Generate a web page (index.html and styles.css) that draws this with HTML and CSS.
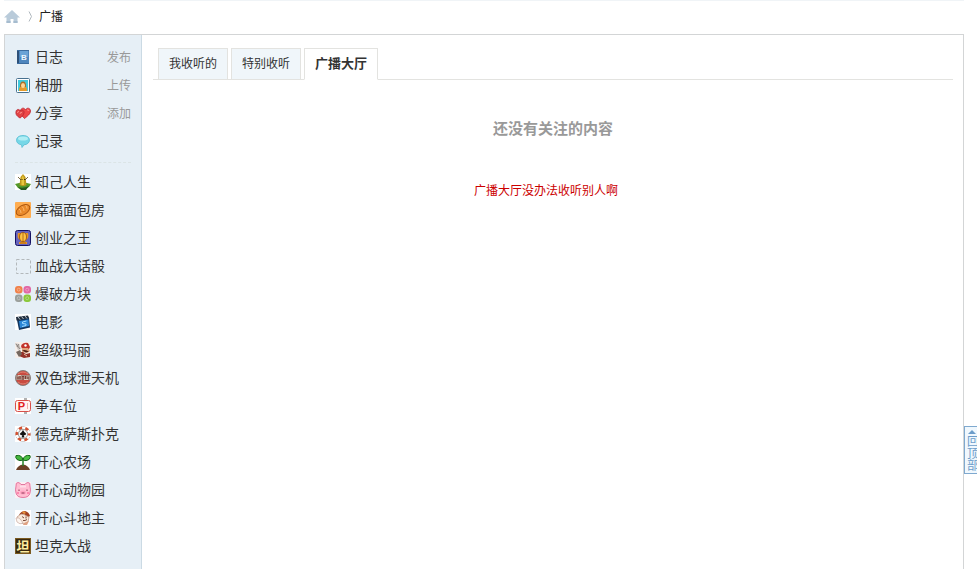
FILE: index.html
```html
<!DOCTYPE html>
<html lang="zh-CN">
<head>
    <meta charset="UTF-8">
    <meta name="viewport" content="width=device-width, initial-scale=1.0">
    <title>广播</title>
    <link rel="stylesheet" href="styles.css">
</head>
<body>

<div class="wrap">
    <nav class="crumb">
        <a href="#" class="home" aria-label="首页">
            <svg width="16" height="14" viewBox="0 0 16 14"><path d="M8 0L16 7.5H13.500V13H9.500V9H6.500V13H2.500V7.500H0Z" fill="#b9cbda"/><path d="M2.500 11H6.500V13H2.500ZM9.500 11H13.500V13H9.500Z" fill="#a6bccf"/></svg>
        </a>
        <svg class="arrow" width="5" height="11" viewBox="0 0 5 11"><path d="M1 0.500L3.500 5.500L1 10.500" fill="none" stroke="#b0b8be"/></svg>
        <a href="#">广播</a>
    </nav>

    <div class="box">
        <aside class="side">
            <ul class="apps main-apps">
                <li>
                    <svg class="icon" viewBox="0 0 16 16"><rect x="2" y="1" width="12" height="14" fill="#4f86bd"/><rect x="2" y="1" width="2" height="14" fill="#2d5078"/><path d="M2 1.500H14M2 14.500H14" stroke="#3c6c9f"/><rect x="5" y="2" width="8" height="6" fill="#6ba3d6"/><text x="9" y="11" class="letter" font-size="8" fill="#eef6fc">B</text></svg>
                    <a href="#">日志</a><a href="#" class="act">发布</a>
                </li>
                <li>
                    <svg class="icon" viewBox="0 0 16 16"><rect x="1.500" y="1.500" width="13" height="14" rx="1" fill="#fff" stroke="#47708f"/><rect x="3" y="3" width="10" height="11" fill="#3fc9dc"/><path d="M4 14V12Q4 10 6 10H10Q12 10 12 12V14Z" fill="#e69a2b"/><path d="M5 10Q4.500 4.500 8 4.500T11 10Z" fill="#ad7028"/><ellipse cx="8" cy="8.500" rx="2" ry="2.500" fill="#ffd596"/></svg>
                    <a href="#">相册</a><a href="#" class="act">上传</a>
                </li>
                <li>
                    <svg class="icon" viewBox="0 0 16 16"><path d="M9.500 13.500C6 10 5 8 5.500 5.500C6 3 9 2 10.500 5C12 2 15.500 3 15.500 6C15.500 9 12 11.500 9.500 13.500Z" fill="#ee4848" stroke="#bd2430" stroke-width=".8"/><path d="M5 13C1.500 11 0.500 9 1 6.500C1.500 4 4 3.800 5.300 5.800C7.500 4 9.500 6 9 8C8.500 10 7 12 5 13Z" fill="#e04344" stroke="#b92330" stroke-width=".8"/><path d="M2.500 8Q2.500 6 4 6.500M5 9Q5 7 7 7.500M12 5Q13.500 4.500 14 6" fill="none" stroke="#ff9b96" stroke-width=".8"/></svg>
                    <a href="#">分享</a><a href="#" class="act">添加</a>
                </li>
                <li>
                    <svg class="icon" viewBox="0 0 16 16"><path d="M8 2.500C12 2.500 14.500 4.500 14.500 7.200C14.500 9.500 12 11.800 9 11.800L7 14.500L6.500 11.800C3.500 11.500 1.500 9.500 1.500 7.200C1.500 4.500 4 2.500 8 2.500Z" fill="#76d7e7" stroke="#58bdd3" stroke-width=".8"/><ellipse cx="8" cy="5.500" rx="5" ry="2" fill="#b0edf4"/></svg>
                    <a href="#">记录</a>
                </li>
            </ul>
            <hr>
            <ul class="apps">
                <li>
                    <svg class="icon" viewBox="0 0 16 16"><rect width="16" height="16" fill="#fff"/><path d="M0 10Q8 7 16 10L14 13Q8 17 3 14Z" fill="#54982a"/><path d="M3 13Q8 15 14 12L11 16H6Z" fill="#275b1e"/><path d="M8 0L10.500 3L11.500 11Q8 13 4.500 11L5.500 3Z" fill="#c09a1b"/><path d="M8 1L9 5V11H6.500V5Z" fill="#e9c83e"/><path d="M3 3L6 6M13 3L10 6" stroke="#594516" stroke-width=".8"/><path d="M7 5V6M9.500 5V6" stroke="#3e3210"/></svg>
                    <a href="#">知己人生</a>
                </li>
                <li>
                    <svg class="icon" viewBox="0 0 16 16"><rect width="16" height="16" rx="1" fill="#ffad50"/><ellipse cx="8" cy="8" rx="7.500" ry="4.500" transform="rotate(-32 8 8)" fill="#e9892a" stroke="#a9530e"/><path d="M4 7Q6 8 6 11M7 4.500Q9 6 9 9M10.500 3Q12 4 12 6.500" fill="none" stroke="#ffc37e" stroke-width=".8"/></svg>
                    <a href="#">幸福面包房</a>
                </li>
                <li>
                    <svg class="icon" viewBox="0 0 16 16"><rect x=".5" y=".5" width="15" height="15" rx="2" fill="#6663bd" stroke="#151363"/><path d="M3 3Q1.500 8 5 10L6 12H4V14H12V12H10L11 10Q14.500 8 13 3Z" fill="#e79620"/><ellipse cx="8" cy="7" rx="3.500" ry="4.500" fill="#fdc343" stroke="#8f480c" stroke-width=".8"/><path d="M8 3V11M5 13H11" stroke="#a75b12" stroke-width=".8"/></svg>
                    <a href="#">创业之王</a>
                </li>
                <li>
                    <svg class="icon" viewBox="0 0 16 16"><rect x="1.500" y="1.500" width="14" height="14" fill="none" stroke="#b3b8bb" stroke-dasharray="3 2"/></svg>
                    <a href="#">血战大话骰</a>
                </li>
                <li>
                    <svg class="icon" viewBox="0 0 16 16"><rect width="7.500" height="7.500" rx="3" fill="#f0824b"/><rect x="8.500" width="7.500" height="7.500" rx="3" fill="#e268a5"/><rect y="8.500" width="7.500" height="7.500" rx="3" fill="#9b9f9b"/><rect x="8.500" y="8.500" width="7.500" height="7.500" rx="3" fill="#8bc83a"/><g fill="none" stroke="#fff" stroke-opacity=".3"><circle cx="3.700" cy="3.700" r="1.500"/><circle cx="12.200" cy="3.700" r="1.500"/><circle cx="3.700" cy="12.200" r="1.500"/><circle cx="12.200" cy="12.200" r="1.500"/></g></svg>
                    <a href="#">爆破方块</a>
                </li>
                <li>
                    <svg class="icon" viewBox="0 0 16 16"><rect width="16" height="16" fill="#fff"/><path d="M2 6L14 3.500L15 13.500L4 16Z" fill="#12365f"/><path d="M4 7L13.500 5.500L14 12L5 14Z" fill="#2a86d6"/><path d="M1 3L13 1.500L14 4L1.500 6.500Z" fill="#202c3b"/><path d="M3 3L5 5.500M6.500 2.500L8.500 5M10 2L12 4.500" stroke="#b9c6d0"/><path d="M11.500 7L7.500 8V9.500L11 10V11.500L7 12.500" fill="none" stroke="#a1dbff"/></svg>
                    <a href="#">电影</a>
                </li>
                <li>
                    <svg class="icon" viewBox="0 0 16 16"><rect width="16" height="16" fill="#f5eeea"/><path d="M6 4Q8 0 13 1L15 5L14 7L7 7Z" fill="#c2332a"/><path d="M7 6H13L15 9L12 11L7 10Z" fill="#dfa17a"/><path d="M7 8.500Q10 7 14 9.500L11 10.500Z" fill="#4b2118"/><path d="M5 10L8 10L11 12L15 11V15L9 16L4 14Z" fill="#943029"/><path d="M0 1L4 2L6 7L3 8Z" fill="#c9c3bf"/><path d="M1 2L5 7M4 2L2 5" stroke="#807772" stroke-width=".8"/><path d="M1 10L5 8L7 12L4 15Z" fill="#756860"/><path d="M9 12L12 14" stroke="#e4c2a5"/><circle cx="10.500" cy="3.500" r="1.200" fill="#fff"/></svg>
                    <a href="#">超级玛丽</a>
                </li>
                <li>
                    <svg class="icon" viewBox="0 0 16 16"><circle cx="8" cy="8" r="7.500" fill="#c94b40" stroke="#87807c"/><path d="M3 4Q8 0 13 4M3 12Q8 16 13 12" fill="none" stroke="#dd8072"/><rect x="1" y="5" width="14" height="5" fill="#a98b80"/><path d="M2 8H4M5 6V9M7 6.500H9M8 7V10M10.500 6V9M12 8H14" stroke="#7b3b33"/><path d="M3 5.500H6M9 9.500H13" stroke="#dcc8b8"/></svg>
                    <a href="#">双色球泄天机</a>
                </li>
                <li>
                    <svg class="icon" viewBox="0 0 16 16"><rect width="16" height="16" fill="#fff"/><rect x=".5" y="2.500" width="15" height="11" rx="2" fill="#fff3f0" stroke="#d8504a"/><text x="6.500" y="12" class="letter" font-size="11" fill="#e2211e">P</text><path d="M9 1H12M9 15H12" stroke="#999" stroke-width="1.500"/><path d="M12.500 5V11" stroke="#f1aca7"/></svg>
                    <a href="#">争车位</a>
                </li>
                <li>
                    <svg class="icon" viewBox="0 0 16 16"><rect width="16" height="16" fill="#fff"/><circle cx="8" cy="8" r="7.500" fill="#3f3a38"/><circle cx="8" cy="8" r="6" fill="none" stroke="#fff" stroke-width="3"/><circle cx="8" cy="8" r="6.200" fill="none" stroke="#d4502f" stroke-width="2.600" stroke-dasharray="3.200 3.290" stroke-dashoffset="1.600"/><circle cx="8" cy="8" r="4.700" fill="#f4f4f4" stroke="#777" stroke-width=".6"/><path d="M8 4Q9 6 11 7.500Q11.500 9.500 8.700 9.300L9.500 11.500H6.500L7.300 9.300Q4.500 9.500 5 7.500Q7 6 8 4Z" fill="#111"/></svg>
                    <a href="#">德克萨斯扑克</a>
                </li>
                <li>
                    <svg class="icon" viewBox="0 0 16 16"><rect width="16" height="16" fill="#fff"/><path d="M1 16Q3 11 8 10.500Q13 11 15 16Z" fill="#6c4026"/><path d="M8 12V5" stroke="#278228" stroke-width="1.500"/><path d="M8 6Q5 7.500 2 5.500Q0 3.500 1 1.500Q7 0.500 8 6Z" fill="#43b53c" stroke="#19671f"/><path d="M8 6Q11 7.500 14 5.500Q16 3 15 1.500Q9 0.500 8 6Z" fill="#4bc043" stroke="#19671f"/></svg>
                    <a href="#">开心农场</a>
                </li>
                <li>
                    <svg class="icon" viewBox="0 0 16 16"><rect width="16" height="16" fill="#fdeef3"/><path d="M1 4Q0.500 0.500 3 0.500Q5 0.500 6 2.500H10Q11 0.500 13 0.500Q15.500 0.500 15 4Q16 8 15 11Q14 15.500 8 15.500Q2 15.500 1 11Q0 8 1 4Z" fill="#ffbdd1" stroke="#d9618f" stroke-width=".8"/><ellipse cx="8" cy="10.500" rx="3" ry="2" fill="#ffa2c0"/><path d="M4 7.500V9M12 7.500V9M6.500 11H9.500" stroke="#8e3a58"/><path d="M2 11H4M12 11H14" stroke="#ff86ae" stroke-width="2"/><path d="M5 4.500H11" stroke="#ffdce7" stroke-width="2"/></svg>
                    <a href="#">开心动物园</a>
                </li>
                <li>
                    <svg class="icon" viewBox="0 0 16 16"><rect width="16" height="16" fill="#fff"/><path d="M4 5Q6 1 10 1Q14 2 15 6L12 8L9 4Z" fill="#a2401f"/><path d="M7 2L9 1L11 3L9 4Z" fill="#e8953e"/><path d="M2 7L6 4L9 4.500L14 7L13 12L9 14L4 12Z" fill="#f9e7d8" stroke="#b48d78" stroke-width=".7"/><path d="M1 8Q4 7 6 10L8 13Q5 15 2 12Z" fill="#fdf6f0" stroke="#c8aaa0" stroke-width=".7"/><path d="M7 6.500L9 8M11 6.500V8.500M8 10.500Q10 11 12 9.500" fill="none" stroke="#6e3b2a" stroke-width=".9"/><path d="M9 13L14 11L12 15H8Z" fill="#e0a283"/></svg>
                    <a href="#">开心斗地主</a>
                </li>
                <li>
                    <svg class="icon" viewBox="0 0 16 16"><rect width="16" height="16" fill="#7a5a20"/><rect x="1" y="1" width="14" height="14" fill="#3a2a10"/><text x="8" y="13" class="letter" font-size="13" fill="#ffeda0">坦</text></svg>
                    <a href="#">坦克大战</a>
                </li>
            </ul>
        </aside>

        <main class="content">
            <ul class="tabs">
                <li><a href="#">我收听的</a></li>
                <li><a href="#">特别收听</a></li>
                <li class="on"><a href="#">广播大厅</a></li>
            </ul>
            <h2>还没有关注的内容</h2>
            <p class="notice">广播大厅没办法收听别人啊</p>
        </main>
    </div>
</div>

<a href="#" class="gotop"><span>回顶部</span></a>

</body>
</html>
```

FILE: styles.css
```css
* {
    box-sizing: border-box;
}

body {
    margin: 0;
    background: #fff;
    color: #333;
    font-family: "Noto Sans CJK SC", sans-serif;
    font-size: 12px;
}

a {
    color: #333;
    text-decoration: none;
}

ul {
    margin: 0;
    padding: 0;
    list-style: none;
}

.wrap {
    display: flex;
    flex-direction: column;
    min-height: 100vh;
    margin: 0 13px 0 4px;
    border-top: 1px solid #f0f4f7;
}

/* breadcrumb */
.crumb {
    display: flex;
    align-items: center;
    height: 33px;
    padding-bottom: 4px;
}

.crumb a {
    color: #222;
}

.crumb .home {
    display: flex;
    padding-top: 2px;
}

.crumb .arrow {
    margin: 2px 6px 0 8px;
}

.box {
    display: flex;
    flex: 1;
    border: 1px solid #d3d5d6;
    border-bottom: 0;
}

/* left menu */
.side {
    width: 137px;
    padding: 8px 10px 0 10px;
    background: #e6eff6;
    border-right: 1px solid #cbdae4;
}

.apps li {
    display: flex;
    align-items: center;
    height: 28px;
    font-size: 14px;
}

.apps a {
    padding-bottom: 2px;
}

.icon {
    width: 16px;
    height: 16px;
    margin-right: 4px;
}

.letter {
    font-family: "Liberation Sans", "Noto Sans CJK SC", sans-serif;
    font-weight: bold;
    text-anchor: middle;
}

.apps .act {
    margin-left: auto;
    color: #999;
    font-size: 12px;
}

.side hr {
    height: 1px;
    margin: 7px 0 5px;
    border: 0;
    border-top: 1px dashed #dbe4e6;
}

/* right part */
.content {
    flex: 1;
    padding: 13px 10px 0 11px;
    text-align: center;
}

.tabs {
    display: flex;
    gap: 3px;
    padding-left: 5px;
    border-bottom: 1px solid #e3e3e0;
}

.tabs li {
    height: 32px;
    margin-bottom: -1px;
    padding: 0 10px;
    border: 1px solid #e3e3e0;
    background: #f0f6fa;
    line-height: 28px;
}

.tabs .on {
    border-bottom-color: #fff;
    background: #fff;
    font-size: 13px;
    font-weight: bold;
}

.content h2 {
    margin: 37px 0 0;
    color: #999;
    font-size: 15px;
    line-height: 22px;
}

.notice {
    margin: 42px 14px 0 0;
    color: #c00;
    line-height: 18px;
}

/* back to top, hangs over the right edge */
.gotop {
    position: fixed;
    right: -5px;
    bottom: 95px;
    width: 18px;
    height: 48px;
    padding-left: 2px;
    border: 1px solid #7fa9cf;
    background: #f0f8fe;
}

.gotop::before {
    content: "";
    display: block;
    width: 0;
    margin: 3px 0 1px 1px;
    border: 4px solid transparent;
    border-top: 0;
    border-bottom-color: #6d9dca;
}

.gotop span {
    display: block;
    width: 12px;
    color: #6d9dca;
    line-height: 12px;
    word-break: break-all;
}
```
